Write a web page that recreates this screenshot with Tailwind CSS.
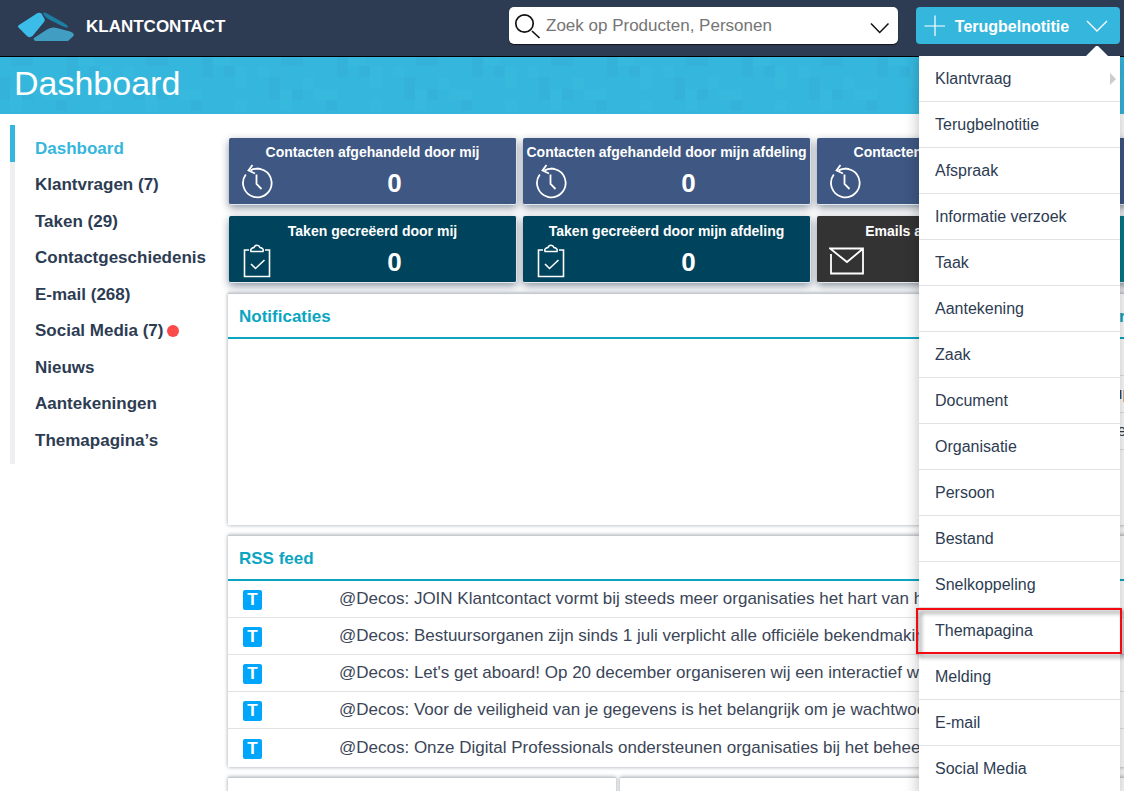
<!DOCTYPE html>
<html lang="nl">
<head>
<meta charset="utf-8">
<title>Klantcontact - Dashboard</title>
<script src="https://cdn.jsdelivr.net/npm/@tailwindcss/browser@4"></script>
</head>
<body class="h-screen overflow-hidden bg-white font-['Liberation_Sans',Arial,sans-serif] text-base text-[#2d3c52]">
<svg class="hidden">
  <symbol id="clock" viewBox="0 0 32 36" fill="none" stroke="white" stroke-width="1.800">
    <path d="M4.800 10.500A14.300 14.300 0 1 0 9.500 6.400Q14 4 20 4.800"/><path d="M11.500 1L7.500 6.500L14 9.500"/><path d="M15.500 10.500V20L20.500 25"/>
  </symbol>
  <symbol id="clip" viewBox="0 0 28 34" fill="none" stroke="white" stroke-width="1.600">
    <path d="M6 6H1.500V32.500H26.500V6H22"/><path d="M8 7.500C7 5 9 4 11 3.500C12 0.500 16 0.500 17 3.500C19 4 21 5 20 7.500Z"/><path d="M8 20L12.500 24.500L21.500 16"/>
  </symbol>
  <symbol id="mail" viewBox="0 0 36 28" fill="none" stroke="white" stroke-width="1.800">
    <path d="M2 7V26.500H34V1.500H1L18 15L33 2.500"/>
  </symbol>
</svg>
<div class="flex h-full flex-col">
  <header class="flex h-[57px] shrink-0 items-start border-b border-black bg-[#2d3c52] pr-1">
    <a href="#" class="flex h-[53px] flex-1 items-center gap-3 pl-[18px] text-[17px] font-bold text-white">
      <svg class="h-[30px] w-14" viewBox="0 0 56 30"><path fill="#3cbde9" d="M0 15Q-0.500 14 1 13L18 2Q21 0 23.500 1.500L26 6Q27.500 8 26 10L14.500 24Q12 26 9.500 24.500Z"/><path fill="#1c7ea3" d="M25 1Q26 0 29 1.500L46 11Q51 14 50 15.500Q48 16 44 14L33 8.500Q26 5 25 1Z"/><path fill="#419dc2" d="M16 26L29 17.500Q34 14.500 39 16L52 19.500Q57 21.500 55.500 24L50 29H18Q15 29 16 26Z"/></svg>
      KLANTCONTACT
    </a>
    <label class="mt-[7px] mr-[18px] flex h-[37px] w-[389px] items-center rounded-[5px] bg-white pr-2 pl-1.5 shadow-[0_1px_1px_#10151d]">
      <svg class="mr-[7px] size-6 shrink-0 overflow-visible" viewBox="0 0 24 24" fill="none" stroke="#111" stroke-width="1.700"><circle cx="9.500" cy="9.500" r="8.700"/><path d="M17 17L24.500 24"/></svg>
      <input type="text" aria-label="Zoeken" placeholder="Zoek op Producten, Personen" class="min-w-0 flex-1 text-[17px] outline-none placeholder:text-[#757575]">
      <svg class="mt-1 h-3 w-5 shrink-0" viewBox="0 0 20 12" fill="none" stroke="#111" stroke-width="1.500"><path d="M1 1.500L9.700 10.500L18.500 1.500"/></svg>
    </label>
    <button type="button" aria-expanded="true" class="mt-[7px] flex h-[37px] w-[204px] items-center rounded-sm bg-[#35b6dd] px-2 text-white">
      <svg class="size-[22px]" viewBox="0 0 22 22" stroke="white" stroke-width="1.200"><path d="M11 0.500V21M0.500 11H21"/></svg>
      <span class="flex-1 pt-0.5 pr-2 text-center font-bold">Terugbelnotitie</span>
      <svg class="mr-1 h-3 w-[22px]" viewBox="0 0 22 12" fill="none" stroke="white" stroke-width="1.300"><path d="M1 1L11 11L21 1"/></svg>
    </button>
  </header>

  <div class="relative h-[57px] shrink-0 bg-[#35b7dd]">
    <svg class="absolute inset-0 h-full w-full" aria-hidden="true">
      <defs><pattern id="mosaic" x="95" width="135" height="68" patternUnits="userSpaceOnUse">
        <path fill="#34b2da" d="M51 0h22v9h-22zM107 0h11v20h-11zM129 9h6v11h-6zM0 9h5v11h-5zM39 20h11v23h-11zM62 32h11v11h-11zM96 43h11v11h-11z"/>
        <path fill="#37b9dd" d="M5 9h12v23h-12zM28 9h11v11h-11zM73 20h11v12h-11zM50 32h12v22h-12zM84 32h23v11h-23zM5 43h12v11h-12zM118 0h17v9h-17z"/>
      </pattern></defs>
      <rect width="100%" height="100%" fill="url(#mosaic)"/>
    </svg>
    <h1 class="relative pt-1.5 pl-3.5 text-[34px] leading-10 text-white">Dashboard</h1>
  </div>

  <div class="flex min-h-0 flex-1">
    <nav class="mt-[11px] flex h-[339px] w-[220px] shrink-0 pl-2.5">
      <div class="w-[5px] shrink-0 bg-[#edeff1]"><div class="h-[37px] bg-[#35b6dd]"></div></div>
      <div class="mt-[5px] grid h-[329px] grid-rows-9 items-center pl-5 text-[17px] font-bold whitespace-nowrap">
        <a href="#" class="text-[#35b6dd]">Dashboard</a>
        <a href="#">Klantvragen (7)</a>
        <a href="#">Taken (29)</a>
        <a href="#">Contactgeschiedenis</a>
        <a href="#">E-mail (268)</a>
        <a href="#" class="flex items-center gap-1">Social Media (7)<span class="size-3 rounded-full bg-[#fb4b4b]"></span></a>
        <a href="#">Nieuws</a>
        <a href="#">Aantekeningen</a>
        <a href="#">Themapagina’s</a>
      </div>
    </nav>

    <main class="min-w-0 flex-1 overflow-hidden pt-6 pl-2">
     <div class="flex w-[1172px] flex-col gap-2.5">
      <section class="grid grid-cols-4 gap-x-1.5 gap-y-[11px] px-px text-center text-sm font-bold text-white">
        <article class="relative h-[67px] rounded-xs border-r border-b border-[#e5e8ec] bg-[#3e5783] pt-[5px] shadow-[0_3px_8px_#8b95a2]"><h2 class="leading-[18px]">Contacten afgehandeld door mij</h2><svg class="absolute top-[26px] left-3 h-9 w-8"><use href="#clock"/></svg><p class="pl-11 text-[26px] leading-[44px]">0</p></article>
        <article class="relative h-[67px] rounded-xs border-r border-b border-[#e5e8ec] bg-[#3e5783] pt-[5px] shadow-[0_3px_8px_#8b95a2]"><h2 class="leading-[18px]">Contacten afgehandeld door mijn afdeling</h2><svg class="absolute top-[26px] left-3 h-9 w-8"><use href="#clock"/></svg><p class="pl-11 text-[26px] leading-[44px]">0</p></article>
        <article class="relative h-[67px] rounded-xs border-r border-b border-[#e5e8ec] bg-[#3e5783] pt-[5px] shadow-[0_3px_8px_#8b95a2]"><h2 class="leading-[18px]">Contacten afgehandeld door mij</h2><svg class="absolute top-[26px] left-3 h-9 w-8"><use href="#clock"/></svg></article>
        <article class="h-[67px] rounded-xs border-r border-b border-[#e5e8ec] bg-[#3e5783] shadow-[0_3px_8px_#8b95a2]"></article>
        <article class="relative h-[67px] rounded-xs border-r border-b border-[#e5e8ec] bg-[#00435c] pt-1.5 shadow-[0_3px_8px_#8b95a2]"><h2 class="leading-[18px]">Taken gecreëerd door mij</h2><svg class="absolute top-7 left-3.5 h-[34px] w-7"><use href="#clip"/></svg><p class="pl-11 text-[26px] leading-[44px]">0</p></article>
        <article class="relative h-[67px] rounded-xs border-r border-b border-[#e5e8ec] bg-[#00435c] pt-1.5 shadow-[0_3px_8px_#8b95a2]"><h2 class="leading-[18px]">Taken gecreëerd door mijn afdeling</h2><svg class="absolute top-7 left-3.5 h-[34px] w-7"><use href="#clip"/></svg><p class="pl-11 text-[26px] leading-[44px]">0</p></article>
        <article class="relative h-[67px] rounded-xs border-r border-b border-[#e5e8ec] bg-[#333] pt-1.5 shadow-[0_3px_8px_#8b95a2]"><h2 class="leading-[18px]">Emails afgehandeld door mij</h2><svg class="absolute top-[31px] left-3 h-7 w-9"><use href="#mail"/></svg></article>
        <article class="h-[67px] rounded-xs border-r border-b border-[#e5e8ec] bg-[#07798a] shadow-[0_3px_8px_#8b95a2]"></article>
      </section>

      <div class="grid grid-cols-3 gap-x-1">
        <section class="col-span-2 h-[232px] border-t border-[#c6cbd0] bg-white shadow-[0_0_4px_#9aa3ac]">
          <h2 class="h-[45px] border-b-2 border-[#0ba5c2] pl-[11px] text-[17px] leading-[45px] font-bold text-[#0ba5c2]">Notificaties</h2>
        </section>
        <section class="h-[232px] border-t border-[#c6cbd0] bg-white text-[17px] shadow-[0_0_4px_#9aa3ac]">
          <h2 class="h-[45px] border-b-2 border-[#0ba5c2] pl-[107px] leading-[45px] font-bold text-[#0ba5c2]">r</h2>
          <p class="h-[37px] border-b border-[#e0e2e4]"></p>
          <p class="h-[37px] border-b border-[#e0e2e4] pl-[101px] leading-9">up</p>
          <p class="h-[37px] border-b border-[#e0e2e4] pl-[105px] leading-9">e</p>
        </section>
      </div>

      <section class="border-t border-[#c6cbd0] bg-white pb-px text-[#3b4658] shadow-[0_0_4px_#9aa3ac]">
        <h2 class="h-[45px] border-b-2 border-[#0ba5c2] pl-[11px] text-[17px] leading-[45px] font-bold text-[#0ba5c2]">RSS feed</h2>
        <ul class="divide-y divide-[#e0e2e4] text-[17px] whitespace-nowrap">
          <li class="flex h-[37px] items-center pl-[15px]"><span class="mt-0.5 mr-[77px] flex h-5 w-[19px] items-center justify-center rounded-xs bg-[#00a6fb] font-bold text-white">T</span>@Decos: JOIN Klantcontact vormt bij steeds meer organisaties het hart van het</li>
          <li class="flex h-[37px] items-center pl-[15px]"><span class="mt-0.5 mr-[77px] flex h-5 w-[19px] items-center justify-center rounded-xs bg-[#00a6fb] font-bold text-white">T</span>@Decos: Bestuursorganen zijn sinds 1 juli verplicht alle officiële bekendmakingen</li>
          <li class="flex h-[37px] items-center pl-[15px]"><span class="mt-0.5 mr-[77px] flex h-5 w-[19px] items-center justify-center rounded-xs bg-[#00a6fb] font-bold text-white">T</span>@Decos: Let's get aboard! Op 20 december organiseren wij een interactief webinar</li>
          <li class="flex h-[37px] items-center pl-[15px]"><span class="mt-0.5 mr-[77px] flex h-5 w-[19px] items-center justify-center rounded-xs bg-[#00a6fb] font-bold text-white">T</span>@Decos: Voor de veiligheid van je gegevens is het belangrijk om je wachtwoord</li>
          <li class="flex h-[37px] items-center pl-[15px]"><span class="mt-0.5 mr-[77px] flex h-5 w-[19px] items-center justify-center rounded-xs bg-[#00a6fb] font-bold text-white">T</span>@Decos: Onze Digital Professionals ondersteunen organisaties bij het beheer</li>
        </ul>
      </section>

      <div class="grid grid-cols-3 gap-x-1">
        <section class="h-40 border-t border-[#c6cbd0] bg-white shadow-[0_0_4px_#9aa3ac]"></section>
        <section class="h-40 border-t border-[#c6cbd0] bg-white shadow-[0_0_4px_#9aa3ac]"></section>
        <section class="h-40 border-t border-[#c6cbd0] bg-white shadow-[0_0_4px_#9aa3ac]"></section>
      </div>
     </div>
    </main>
  </div>
</div>

<div class="absolute top-[46px] right-1 bottom-0 w-[201px]">
  <svg class="ml-[167px] block h-2.5 w-[22px]" viewBox="0 0 22 10"><path fill="white" d="M0 10L11 -1L22 10Z"/></svg>
  <ul class="h-full divide-y divide-[#e0e2e4] bg-white leading-[45px] shadow-[0_0_14px_#0004] [clip-path:inset(0_-16px)]">
    <li class="flex h-[46px] items-center justify-between pr-1 pl-4"><a href="#">Klantvraag</a><svg class="h-3 w-[7px]" viewBox="0 0 7 12"><path fill="#ccc" d="M1 0L7 6L1 12Z"/></svg></li>
    <li class="h-[46px] pl-4"><a href="#">Terugbelnotitie</a></li>
    <li class="h-[46px] pl-4"><a href="#">Afspraak</a></li>
    <li class="h-[46px] pl-4"><a href="#">Informatie verzoek</a></li>
    <li class="h-[46px] pl-4"><a href="#">Taak</a></li>
    <li class="h-[46px] pl-4"><a href="#">Aantekening</a></li>
    <li class="h-[46px] pl-4"><a href="#">Zaak</a></li>
    <li class="h-[46px] pl-4"><a href="#">Document</a></li>
    <li class="h-[46px] pl-4"><a href="#">Organisatie</a></li>
    <li class="h-[46px] pl-4"><a href="#">Persoon</a></li>
    <li class="h-[46px] pl-4"><a href="#">Bestand</a></li>
    <li class="h-[46px] pl-4"><a href="#">Snelkoppeling</a></li>
    <li class="relative h-[46px] pl-4"><a href="#">Themapagina</a><span class="absolute top-0 -right-0.5 -left-[3px] h-[46px] border-2 border-[#f3090f] drop-shadow-[3px_3px_2px_#0008]"></span></li>
    <li class="h-[46px] pl-4"><a href="#">Melding</a></li>
    <li class="h-[46px] pl-4"><a href="#">E-mail</a></li>
    <li class="h-[46px] pl-4"><a href="#">Social Media</a></li>
  </ul>
</div>
</body>
</html>
